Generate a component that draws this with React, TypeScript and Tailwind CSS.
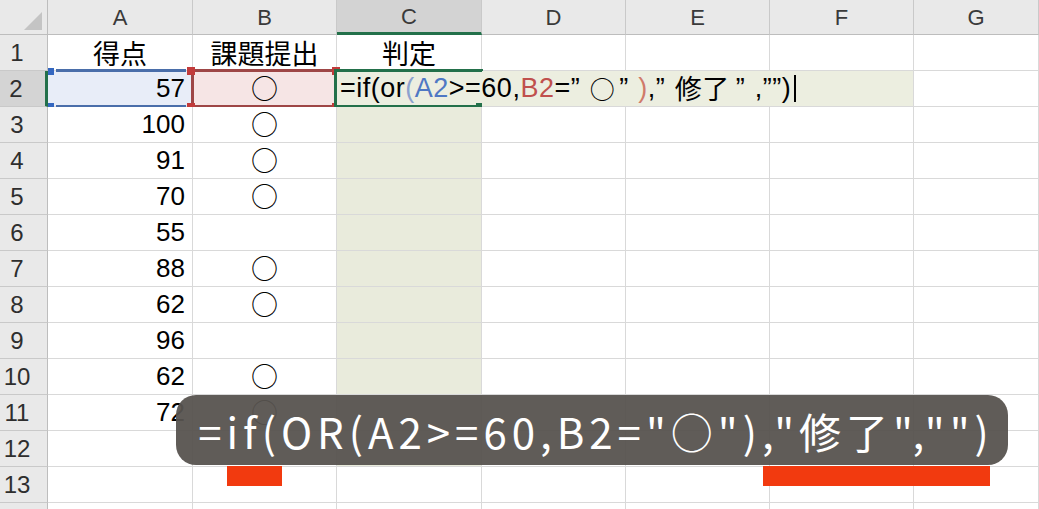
import React from 'react';

const COLS = ['A', 'B', 'C', 'D', 'E', 'F', 'G'];

const scores: Record<number, string> = {
  2: '57', 3: '100', 4: '91', 5: '70', 6: '55', 7: '88', 8: '62', 9: '96', 10: '62', 11: '72',
};
const submitted = [2, 3, 4, 5, 7, 8, 10, 11];

const cellFont = { fontFamily: '"Liberation Sans", "Noto Sans CJK JP", sans-serif' };
const jpFont = { fontFamily: '"Noto Sans CJK JP", "Liberation Sans", sans-serif' };

// quote mark drawn narrow but taking a wide slot, like the sheet font
function Q() {
  return <span className="tracking-[10px]">”</span>;
}

function RowTwoMarks({ col }: { col: string }) {
  if (col === 'A') {
    return (
      <>
        <div className="absolute left-[8px] top-[-2px] w-[130px] h-[39px] border-y-[3px] border-[#4a6eaa]" />
        <div className="absolute left-0 top-[-3px] w-[6px] h-[42px] border-y-[7px] border-[#3467c0]" />
      </>
    );
  }
  if (col === 'B') {
    return (
      <>
        <div className="absolute left-[-2px] top-[-2px] w-[143px] h-[39px] border-[3px] border-r-0 border-[#9e4646]" />
        <div className="absolute left-[-6px] top-[-4px] w-[8px] h-[44px] border-y-[8px] border-[#c23b3b]" />
        <div className="absolute left-[139px] top-[-4px] w-[8px] h-[44px] border-y-[8px] border-[#c23b3b]" />
      </>
    );
  }
  if (col === 'C') {
    return (
      <>
        <div className="absolute left-[-3px] top-[-2px] w-[149px] h-[39px] border-y-[3px] border-l-[3px] border-[#23704a]" />
        <div className="absolute left-[139px] top-[32px] w-[9px] h-[8px] bg-[#23704a]" />
        <div
          className="absolute left-[3px] top-0 h-[35px] flex items-center whitespace-nowrap text-[27px] tracking-[0.5px] text-black z-10"
          style={cellFont}
        >
          <span>=if(or</span>
          <span className="text-[#8da2cf]">(</span>
          <span className="text-[#4f78c4]">A2</span>
          <span>&gt;=60,</span>
          <span className="text-[#c0504d]">B2</span>
          <span>=</span>
          <Q />
          <span style={jpFont} className="text-[25px] mr-[4px]">○</span>
          <Q />
          <span className="text-[#d07a6a]">)</span>
          <span>,</span>
          <Q />
          <span style={jpFont} className="text-[27px] mr-[6px]">修了</span>
          <Q />
          <span>,””)</span>
          <span className="ml-[3px] inline-block w-[2px] h-[27px] bg-black" />
        </div>
      </>
    );
  }
  return null;
}

function Cell({ row, col }: { row: number; col: string }) {
  let bg = 'bg-white';
  let border = 'border-r border-b border-[#d9d9d9]';
  if (row === 2) {
    if (col === 'A') bg = 'bg-[#e8edf8]';
    if (col === 'B') bg = 'bg-[#f6e5e5]';
    if (col === 'C' || col === 'D' || col === 'E') {
      bg = 'bg-[#eceee0]';
      border = 'border-b border-[#d9d9d9]';
    }
    if (col === 'F') bg = 'bg-[#eceee0]';
  } else if (col === 'C' && row >= 3 && row <= 12) {
    bg = 'bg-[#e9ebdc]';
  }

  let content: React.ReactNode = null;
  if (row === 1) {
    const label = col === 'A' ? '得点' : col === 'B' ? '課題提出' : col === 'C' ? '判定' : '';
    content = (
      <span className="w-full text-center text-[27px] leading-none text-black" style={jpFont}>
        {label}
      </span>
    );
  } else if (col === 'A' && scores[row]) {
    content = (
      <span className="w-full text-right pr-[7px] text-[26px] text-black" style={cellFont}>
        {scores[row]}
      </span>
    );
  } else if (col === 'B' && submitted.includes(row)) {
    content = (
      <span className="w-full text-center text-[27px] text-black" style={jpFont}>
        ○
      </span>
    );
  }

  return (
    <div className={`relative flex items-center overflow-visible ${bg} ${border}`}>
      {content}
      {row === 2 && <RowTwoMarks col={col} />}
    </div>
  );
}

export default function App() {
  const rows = Array.from({ length: 14 }, (_, i) => i + 1);

  return (
    <div className="relative w-[1039px] h-[509px] overflow-hidden bg-white" style={cellFont}>
      <div className="grid grid-cols-[48px_145px_144px_145px_144px_144px_144px_125px] grid-rows-[35px_repeat(14,36px)]">
        {/* corner */}
        <div className="flex items-end justify-end pr-[5px] pb-[4px] bg-[#e9e9e9] border-r border-b border-[#bdbdbd]">
          <svg width="18" height="18" viewBox="0 0 18 18">
            <polygon points="18,0 18,18 0,18" fill="#c4c4c4" />
          </svg>
        </div>
        {COLS.map((c) => (
          <div
            key={c}
            className={`flex items-center justify-center text-[22px] text-[#3a3a3a] border-r border-[#c9c9c9] ${
              c === 'C'
                ? 'bg-[#d3d3d3] border-b-[3px] border-b-[#23704a]'
                : 'bg-[#e9e9e9] border-b border-b-[#bdbdbd]'
            }`}
          >
            {c}
          </div>
        ))}

        {rows.map((r) => (
          <React.Fragment key={r}>
            <div
              className={`flex items-center justify-center pr-[13px] text-[24px] text-[#2e2e2e] border-b border-[#c9c9c9] ${
                r === 2
                  ? 'bg-[#d4d4d4] border-r-[3px] border-r-[#23704a]'
                  : 'bg-[#e9e9e9] border-r border-r-[#bdbdbd]'
              }`}
            >
              {r <= 13 ? r : ''}
            </div>
            {COLS.map((c) => (
              <Cell key={c} row={r} col={c} />
            ))}
          </React.Fragment>
        ))}
      </div>

      {/* caption */}
      <div
        className="absolute left-[176px] top-[395px] w-[832px] h-[70px] rounded-[20px] bg-[#57534f]/95 flex items-center justify-center pl-[8px] text-white text-[42px] tracking-[5px] whitespace-nowrap"
        style={jpFont}
      >
        =if(OR(A2&gt;=60,B2="○"),"修了","")
      </div>
      <div className="absolute left-[227px] top-[466px] w-[55px] h-[20px] bg-[#f23a0f]" />
      <div className="absolute left-[763px] top-[466px] w-[227px] h-[20px] bg-[#f23a0f]" />
    </div>
  );
}
